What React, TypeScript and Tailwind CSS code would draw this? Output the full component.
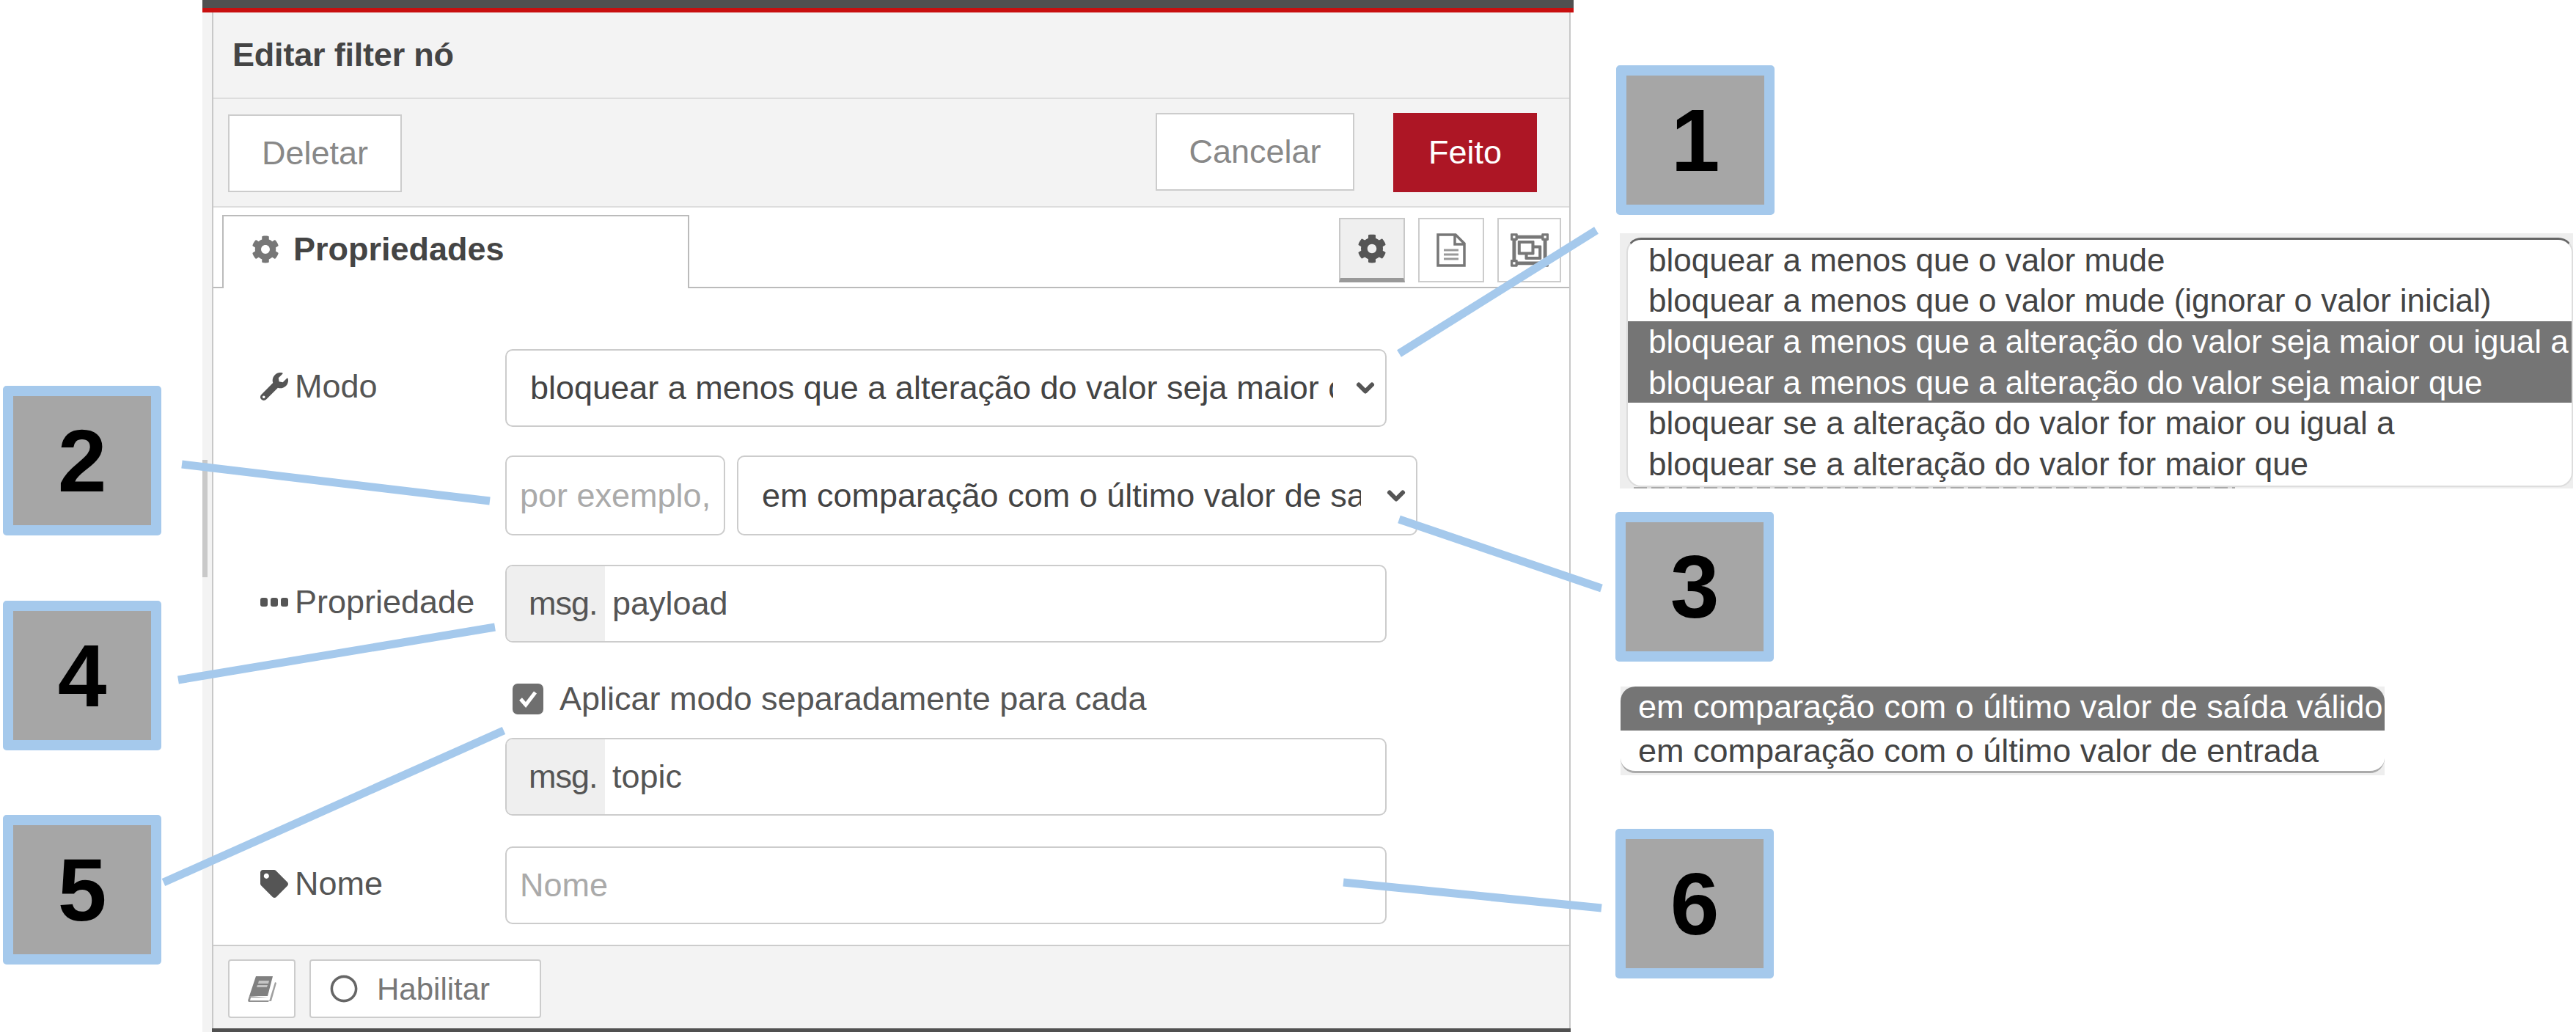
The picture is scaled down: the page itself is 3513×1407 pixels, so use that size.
import { FaCog, FaRegCircle, FaRegObjectGroup, FaTag, FaWrench } from "react-icons/fa";
import { FiChevronDown } from "react-icons/fi";

const font = "font-['Liberation_Sans',Arial,sans-serif]";

function Callout({ n, className }: { n: string; className?: string }) {
return (
<div className={`w-[216px] h-[204px] shrink-0 bg-[#a6a6a6] border-[14px] border-[#a5c9ec] rounded-[5px] flex items-center justify-center text-[120px] font-bold text-black leading-none ${className ?? ""}`}>
{n}
</div>
)
}

function Field({ children, className }: { children: React.ReactNode; className?: string }) {
return (
<div className={`border-2 border-[#cccccc] rounded-[10px] bg-white flex items-center overflow-hidden ${className ?? "h-[106px]"}`}>
{children}
</div>
)
}

function TypedInput({ value }: { value: string }) {
return (
<Field className="w-[1202px] h-[106px]">
<div className="w-[134px] h-full bg-[#efefef] flex items-center pl-[30px] text-[#555555] tracking-[-1px]">msg.</div>
<div className="pl-[10px] text-[#555555]">{value}</div>
</Field>
)
}

function Label({ icon, text }: { icon: React.ReactNode; text: string }) {
return (
<div className="flex items-center gap-[9px] text-[#555555] mt-[-4px]">
{icon}
<span>{text}</span>
</div>
)
}

function Option({ text, on }: { text: string; on?: boolean }) {
return (
<div className={`h-[55.6px] flex items-center pl-[28px] whitespace-nowrap ${on ? "bg-[#757575] text-white" : "text-[#444444]"}`}>
{text}
</div>
)
}

export default function App() {
return (
<div className={`relative w-[3513px] h-[1407px] bg-white flex overflow-hidden text-[45px] ${font}`}>

{/* Left callouts */}
<div className="w-[276px] shrink-0 pl-[4px] pt-[526px] flex flex-col">
<Callout n="2" />
<Callout n="4" className="mt-[89px]" />
<Callout n="5" className="mt-[88px]" />
</div>

{/* Edit tray */}
<div className="w-[1870px] shrink-0 h-full flex flex-col">
<div className="h-[11px] bg-[#505050]" />
<div className="h-[6px] bg-[#c80f0f]" />

<div className="flex-1 flex min-h-0">
<div className="w-[13px] bg-[#f3f3f3] pt-[610px]">
<div className="w-[7px] h-[160px] bg-[#c9c9c9]" />
</div>

<div className="w-[1853px] flex flex-col border-x-2 border-[#c8c8c8]">
{/* Title */}
<div className="h-[118px] shrink-0 bg-[#f3f3f3] border-b-2 border-[#dddddd] flex items-center pl-[26px] font-bold text-[#444444] tracking-[-0.2px]">
Editar filter nó
</div>

{/* Buttons */}
<div className="h-[148px] shrink-0 bg-[#f3f3f3] border-b-2 border-[#dddddd] flex items-center justify-between pl-[20px] pr-[44px]">
<div className="w-[237px] h-[106px] bg-white border-2 border-[#cccccc] flex items-center justify-center text-[#888888] mt-[2px]">Deletar</div>
<div className="flex gap-[53px]">
<div className="w-[271px] h-[106px] bg-white border-2 border-[#cccccc] flex items-center justify-center text-[#888888]">Cancelar</div>
<div className="w-[196px] h-[108px] bg-[#ad1625] flex items-center justify-center text-white">Feito</div>
</div>
</div>

{/* Tabs */}
<div className="h-[110px] shrink-0 border-b-2 border-[#bbbbbb] flex items-end justify-between pl-[12px] pr-[11px]">
<div className="w-[637px] h-[100px] mb-[-2px] bg-white border-2 border-b-0 border-[#bbbbbb] flex items-center pl-[38px] pb-[8px] gap-[19px] font-bold text-[#444444]">
<FaCog className="text-[#777777] text-[38px]" />
Propriedades
</div>
<div className="flex gap-[18px] pb-[6px]">
<div className="w-[90px] h-[88px] bg-[#efefef] border-2 border-b-[6px] border-[#c8c8c8] border-b-[#999999] flex items-center justify-center">
<FaCog className="text-[#555555] text-[40px]" />
</div>
<div className="w-[90px] h-[88px] border-2 border-[#cccccc] flex items-center justify-center">
<svg width="42" height="46" viewBox="0 0 42 46" fill="none" stroke="#777777" strokeWidth="3.5">
<path d="M3 2h24l12 12v30H3z" />
<path d="M26 2v13h13" />
<path d="M11 23h20M11 29h20M11 35h20" strokeWidth="3" stroke="#999999" />
</svg>
</div>
<div className="w-[87px] h-[88px] border-2 border-[#cccccc] flex items-center justify-center">
<FaRegObjectGroup className="text-[#777777] text-[52px]" />
</div>
</div>
</div>

{/* Form */}
<div className="flex-1 min-h-0 pl-[398px] pt-[83px] relative">
<div className="absolute left-[64px] top-[83px] h-[106px] flex items-center">
<Label icon={<FaWrench className="text-[#555555] text-[38px]" />} text="Modo" />
</div>
<Field className="w-[1202px] h-[106px] pl-[32px] pr-[9px] text-[#444444]">
<span className="flex-1 overflow-hidden whitespace-nowrap">bloquear a menos que a alteração do valor seja maior ou igual a</span>
<FiChevronDown className="text-[36px] text-[#555555] shrink-0 ml-[26px] stroke-[4px]" />
</Field>

<div className="flex gap-[16px] mt-[39px]">
<Field className="w-[300px] h-[109px] pl-[18px] pr-[14px] text-[#aaaaaa]">
<span className="overflow-hidden whitespace-nowrap">por exemplo, 10 ou 5%</span>
</Field>
<Field className="w-[928px] h-[109px] pl-[32px] pr-[9px] text-[#444444]">
<span className="flex-1 overflow-hidden whitespace-nowrap">em comparação com o último valor de saída válido</span>
<FiChevronDown className="text-[36px] text-[#555555] shrink-0 ml-[30px] stroke-[4px]" />
</Field>
</div>

<div className="mt-[40px] relative">
<div className="absolute left-[-334px] top-0 h-[106px] flex items-center">
<Label
icon={
<svg width="38" height="14" viewBox="0 0 38 14" fill="#555555">
<rect x="0" y="1" width="10" height="12" rx="3" />
<rect x="14" y="1" width="10" height="12" rx="3" />
<rect x="28" y="1" width="10" height="12" rx="3" />
</svg>
}
text="Propriedade"
/>
</div>
<TypedInput value="payload" />
</div>

<div className="h-[130px] flex items-center pl-[10px] pt-[24px] gap-[22px] text-[#555555]">
<div className="w-[42px] h-[42px] rounded-[7px] bg-[#6f6f6f] flex items-center justify-center">
<svg width="30" height="30" viewBox="0 0 30 30" fill="none" stroke="white" strokeWidth="5">
<path d="M5 15l7 8 13-17" />
</svg>
</div>
Aplicar modo separadamente para cada
</div>

<TypedInput value="topic" />

<div className="mt-[42px] relative">
<div className="absolute left-[-334px] top-0 h-[106px] flex items-center">
<Label icon={<FaTag className="text-[#555555] text-[38px]" />} text="Nome" />
</div>
<Field className="w-[1202px] h-[106px] pl-[18px] text-[#aaaaaa]">Nome</Field>
</div>
</div>

{/* Footer */}
<div className="h-[114px] shrink-0 bg-[#f3f3f3] border-t-2 border-[#cccccc] flex items-start pl-[20px] pt-[18px] gap-[19px]">
<div className="w-[92px] h-[80px] bg-white border-2 border-[#cccccc] rounded-[4px] flex items-center justify-center">
<svg width="41" height="37" viewBox="0 0 41 37">
<path d="M12 1h23l-7 27H3z" fill="#808080" />
<path d="M16 7h14l-1 4H15zM14 13h14l-1 3H13z" fill="#c4c4c4" />
<path d="M3 28l-2 6 1 2h27l1-2H4l1-4h24z" fill="#909090" />
<path d="M38 9l2 1-7 25h-3z" fill="#a0a0a0" />
</svg>
</div>
<div className="w-[316px] h-[80px] bg-white border-2 border-[#cccccc] rounded-[4px] flex items-center pl-[26px] gap-[26px] text-[42px] text-[#777777]">
<FaRegCircle className="text-[#666666] text-[38px]" />
Habilitar
</div>
</div>
<div className="h-[5px] shrink-0 bg-[#505050] mx-[-2px]" />
</div>
</div>
</div>

{/* Right callouts and option lists */}
<div className="flex-1 min-w-0 pl-[58px] pt-[89px]">
<Callout n="1" />

<div className="mt-[25px] ml-[5px] w-[1300px] h-[348px] bg-[#eeeeee] pl-[9px] pt-[6px] overflow-hidden text-[44px]">
<div className="h-[340px] w-[1291px] bg-white rounded-[20px] border-t-[3px] border-t-[#666666] border-x-2 border-b-2 border-[#dddddd] overflow-hidden">
<Option text="bloquear a menos que o valor mude" />
<Option text="bloquear a menos que o valor mude (ignorar o valor inicial)" />
<Option on text="bloquear a menos que a alteração do valor seja maior ou igual a" />
<Option on text="bloquear a menos que a alteração do valor seja maior que" />
<Option text="bloquear se a alteração do valor for maior ou igual a" />
<Option text="bloquear se a alteração do valor for maior que" />
</div>
<div className="h-[2px] w-[820px] ml-[10px] bg-[repeating-linear-gradient(90deg,#aaaaaa_0_18px,#dddddd_18px_24px)]" />
</div>

<Callout n="3" className="mt-[32px] ml-[-1px]" />

<div className="mt-[34px] ml-[6px] w-[1042px] h-[121px] bg-[#eeeeee] overflow-hidden">
<div className="h-[118px] bg-white rounded-[20px] border-b-[3px] border-[#aaaaaa] overflow-hidden">
<div className="h-[60px] bg-[#757575] text-white flex items-center pl-[24px] pb-[4px] whitespace-nowrap">em comparação com o último valor de saída válido</div>
<div className="h-[56px] text-[#444444] flex items-center pl-[24px] whitespace-nowrap">em comparação com o último valor de entrada</div>
</div>
</div>

<Callout n="6" className="mt-[73px] ml-[-1px]" />
</div>

{/* Leader lines */}
<svg className="absolute inset-0 pointer-events-none" width="3513" height="1407" stroke="#a5c9ec" strokeWidth="11" fill="none">
<line x1="1908" y1="482" x2="2177" y2="314" />
<line x1="248" y1="633" x2="668" y2="683" />
<line x1="1908" y1="708" x2="2184" y2="802" />
<line x1="243" y1="927" x2="675" y2="855" />
<line x1="223" y1="1203" x2="687" y2="996" />
<line x1="1832" y1="1203" x2="2184" y2="1238" />
</svg>
</div>
)
}
